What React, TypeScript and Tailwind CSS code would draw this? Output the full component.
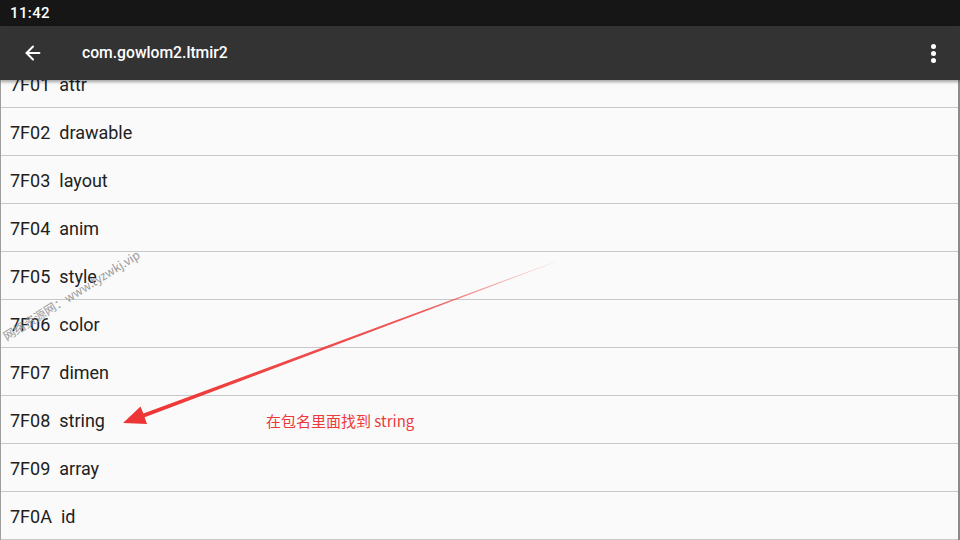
import { ArrowLeft } from 'lucide-react';

const rows = [
  ['7F01', 'attr'],
  ['7F02', 'drawable'],
  ['7F03', 'layout'],
  ['7F04', 'anim'],
  ['7F05', 'style'],
  ['7F06', 'color'],
  ['7F07', 'dimen'],
  ['7F08', 'string'],
  ['7F09', 'array'],
  ['7F0A', 'id'],
];

export default function App() {
  return (
    <div
      className="relative w-[960px] h-[540px] overflow-hidden bg-[#fafafa] flex flex-col"
      style={{ fontFamily: 'Roboto, "Noto Sans CJK SC", sans-serif' }}
    >
      {/* status bar */}
      <div className="h-[26px] shrink-0 bg-[#161616] flex items-center px-[10px]">
        <span className="text-white text-[15px] font-medium tracking-wide">11:42</span>
      </div>

      {/* toolbar */}
      <div className="relative z-10 h-[54px] shrink-0 bg-[#333333] flex items-center shadow-[0_2px_3px_rgba(0,0,0,0.35)]">
        <ArrowLeft className="ml-[22px] text-white" size={22} strokeWidth={2.2} />
        <span className="ml-[38px] text-white text-[15.7px] font-medium">com.gowlom2.ltmir2</span>
        <div className="ml-auto mr-[24px] flex flex-col gap-[2px]">
          <div className="w-[5px] h-[5px] rounded-full bg-white" />
          <div className="w-[5px] h-[5px] rounded-full bg-white" />
          <div className="w-[5px] h-[5px] rounded-full bg-white" />
        </div>
      </div>

      {/* list */}
      <div className="flex-1 overflow-hidden border-l border-[#9e9e9e] border-r-2 border-r-[#8a8a8a]">
        <div className="mt-[-20px] flex flex-col">
          {rows.map(([id, name]) => (
            <div
              key={id}
              className="h-12 shrink-0 border-b border-[#c8c8c8] flex items-center pl-[9px] pt-[2px] text-[18px] text-[#212121] whitespace-pre"
            >
              {id}  {name}
            </div>
          ))}
        </div>
      </div>

      {/* watermark */}
      <div
        className="absolute left-[4px] top-[328px] text-[12px] text-[#9a9a9a] whitespace-nowrap origin-left -rotate-[32deg]"
        style={{ fontFamily: '"Noto Sans CJK SC", sans-serif' }}
      >
        网络资源网：www.tyzwkj.vip
      </div>

      {/* annotation arrow */}
      <svg className="absolute left-0 top-0 pointer-events-none" width="960" height="540">
        <defs>
          <linearGradient id="fade" x1="555" y1="262" x2="123" y2="423" gradientUnits="userSpaceOnUse">
            <stop offset="0" stopColor="#f04040" stopOpacity="0.1" />
            <stop offset="0.3" stopColor="#ee3b3b" stopOpacity="0.85" />
            <stop offset="1" stopColor="#ee3333" stopOpacity="1" />
          </linearGradient>
        </defs>
        <polygon
          points="123,423 147,424 144.6,417.3 555,262.3 555,261.7 143.4,413.5 140.5,406.5"
          fill="url(#fade)"
        />
      </svg>

      <div
        className="absolute left-[266px] top-[410px] text-[15px] text-[#ec3a3a]"
        style={{ fontFamily: '"Noto Sans CJK SC", sans-serif' }}
      >
        在包名里面找到 string
      </div>
    </div>
  );
}
